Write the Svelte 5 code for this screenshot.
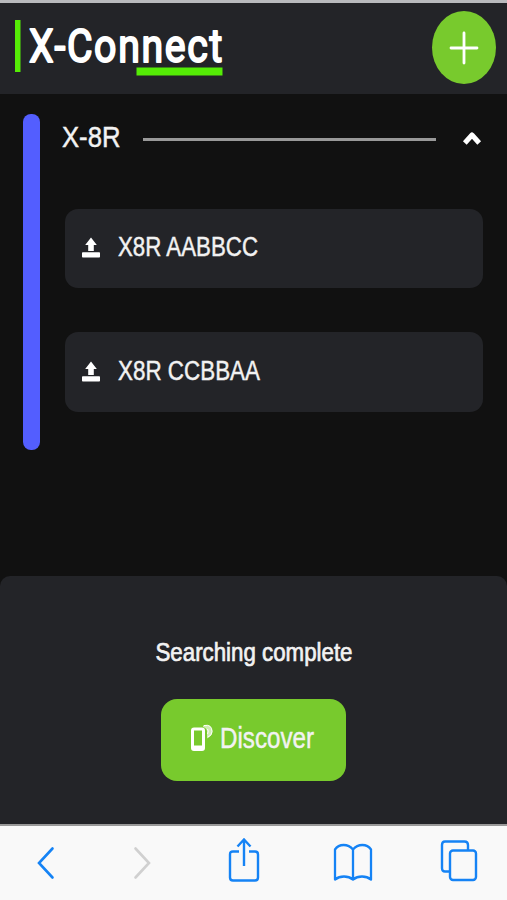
<script>
  // Devices found during the last scan
  const devices = [
    { id: 'AABBCC', label: 'X8R AABBCC', width: 140 },
    { id: 'CCBBAA', label: 'X8R CCBBAA', width: 142 }
  ];

  let open = $state(true);
  let status = $state('Searching complete');
</script>

<div class="app">
  <header>
    <svg class="logo" width="220" height="64" viewBox="0 0 220 64">
      <rect x="0" y="0" width="5.500" height="52" fill="#55ec06" />
      <text x="14" y="42" textLength="195" lengthAdjust="spacingAndGlyphs">X-Connect</text>
      <rect x="121.500" y="47.500" width="86" height="8" fill="#55ec06" />
    </svg>
    <button class="add" aria-label="Add device">
      <svg width="30" height="34" viewBox="0 0 30 34">
        <path d="M15 2V32M2 17H28" fill="none" stroke="#fff" stroke-width="2.800" stroke-linecap="round" />
      </svg>
    </button>
  </header>

  <main>
    <div class="bar"></div>
    <section>
      <button class="group" aria-label="Toggle group" onclick={() => (open = !open)}>
        <svg class="title" width="64" height="44" viewBox="0 0 64 44">
          <text x="0" y="30" textLength="58.500" lengthAdjust="spacingAndGlyphs">X-8R</text>
        </svg>
        <span class="line"></span>
        <svg class="chevron" class:closed={!open} width="20" height="16" viewBox="0 0 20 16">
          <path d="M2.800 12L10 4L17.200 12" fill="none" stroke="#fff" stroke-width="5" stroke-linejoin="round" />
        </svg>
      </button>

      {#if open}
        <div class="devices">
          {#each devices as device (device.id)}
            <div class="device">
              <svg width="20" height="22" viewBox="0 0 20 22">
                <path d="M10 0.500L15.800 8H12.800V14H7.200V8H4.200Z" fill="#fff" />
                <rect x="1" y="15.300" width="18" height="5.200" rx="0.800" fill="#fff" />
              </svg>
              <svg class="name" width="180" height="40" viewBox="0 0 180 40">
                <text x="0" y="28" textLength={device.width} lengthAdjust="spacingAndGlyphs">{device.label}</text>
              </svg>
            </div>
          {/each}
        </div>
      {/if}
    </section>
  </main>

  <div class="panel">
    <svg class="status" width="220" height="34" viewBox="0 0 220 34">
      <text x="11.500" y="24" textLength="197" lengthAdjust="spacingAndGlyphs">{status}</text>
    </svg>
    <button class="discover">
      <svg width="24" height="30" viewBox="0 0 24 30">
        <rect x="2.500" y="6" width="11" height="20.500" rx="1.500" fill="none" stroke="#fff" stroke-width="3" />
        <path d="M2 22.500H14V27H2Z" fill="#fff" />
        <path d="M13 2.500Q21 0 22.500 8Q22.500 13 17 15.500V8.500Q17 5 13 4Z" fill="#fff" fill-opacity="0.650" />
        <path d="M14 2.500Q22 1 22 8.500Q22 12.500 18 14M17.500 6Q19 8 17.500 11" fill="none" stroke="#fff" stroke-width="1" />
      </svg>
      <svg width="100" height="40" viewBox="0 0 100 40">
        <text x="0" y="29.500" textLength="94" lengthAdjust="spacingAndGlyphs">Discover</text>
      </svg>
    </button>
  </div>

  <!-- browser toolbar -->
  <nav>
    <svg width="20" height="36" viewBox="0 0 20 36">
      <path d="M16.500 3.500L3 18L16.500 32.500" fill="none" stroke="#1583f5" stroke-width="2.600" stroke-linecap="round" />
    </svg>
    <svg width="20" height="36" viewBox="0 0 20 36">
      <path d="M3.500 3.500L17 18L3.500 32.500" fill="none" stroke="#d0d0d0" stroke-width="2.600" stroke-linecap="round" />
    </svg>
    <svg width="32" height="52" viewBox="0 0 32 52">
      <path d="M11 14.500H5Q2 14.500 2 17.500V40.500Q2 43.500 5 43.500H27Q30 43.500 30 40.500V17.500Q30 14.500 27 14.500H21M16 29V2.500M9.500 9.500L16 2.500L22.500 9.500" fill="none" stroke="#1583f5" stroke-width="2.400" />
    </svg>
    <svg width="40" height="40" viewBox="0 0 40 40">
      <path d="M20 6.500C15 0.500 6 0.500 2 6.500V36.500C7 32.500 15 32.500 20 36.500C25 32.500 33 32.500 38 36.500V6.500C34 0.500 25 0.500 20 6.500V36.500" fill="none" stroke="#1583f5" stroke-width="2.300" stroke-linejoin="round" />
    </svg>
    <svg width="38" height="48" viewBox="0 0 38 48">
      <path d="M9.500 32.500H5Q2 32.500 2 29V6Q2 2.500 5 2.500H24.500Q28 2.500 28 6V11" fill="none" stroke="#1583f5" stroke-width="2.400" />
      <rect x="10" y="11.500" width="26" height="29.500" rx="3" fill="none" stroke="#1583f5" stroke-width="2.400" />
    </svg>
  </nav>
</div>

<style>
  :global(body) {
    margin: 0;
    background: #111;
  }

  .app {
    display: flex;
    flex-direction: column;
    width: 507px;
    height: 900px;
    overflow: hidden;
    background: #111;
    font-family: 'Liberation Sans', Arial, sans-serif;
  }

  svg {
    display: block;
    flex: none;
    overflow: visible;
  }

  text {
    fill: #f2f2f2;
    stroke: #f2f2f2;
    stroke-width: 0.45px;
  }

  button {
    padding: 0;
    border: none;
    background: none;
    font-family: inherit;
    cursor: pointer;
  }

  header {
    display: flex;
    justify-content: space-between;
    align-items: flex-start;
    box-sizing: border-box;
    height: 94px;
    padding: 8px 11px 0 15px;
    border-top: 3px solid #b9babd;
    background: #232428;
  }

  .logo {
    margin-top: 9px;
  }

  .logo text {
    font-family: Roboto, sans-serif;
    font-size: 47px;
    letter-spacing: 2px;
    fill: #fff;
    stroke: #fff;
    stroke-width: 2px;
    stroke-linejoin: round;
  }

  .add {
    display: flex;
    justify-content: center;
    align-items: center;
    width: 64px;
    height: 73px;
    border-radius: 50%;
    background: #78ca2d;
  }

  main {
    display: flex;
    flex: 1;
    align-items: flex-start;
    padding: 20px 24px 0 23px;
  }

  .bar {
    width: 16.500px;
    height: 336px;
    border-radius: 8px;
    background: #535eff;
  }

  section {
    flex: 1;
    margin-left: 22.500px;
  }

  .group {
    display: flex;
    align-items: center;
    width: 100%;
    height: 50px;
  }

  .title text {
    font-size: 29px;
  }

  .line {
    flex: 1;
    height: 3px;
    margin: 0 26px 0 17px;
    background: #999;
  }

  .chevron {
    margin-right: 1px;
  }

  .chevron.closed {
    transform: rotate(180deg);
  }

  .devices {
    display: flex;
    flex-direction: column;
    gap: 44px;
    padding: 44.500px 0 0 2.500px;
  }

  .device {
    display: flex;
    align-items: center;
    gap: 17px;
    box-sizing: border-box;
    height: 79.500px;
    padding-left: 16px;
    border-radius: 13px;
    background: #232428;
  }

  .name text {
    font-size: 27px;
  }

  .panel {
    display: flex;
    flex-direction: column;
    align-items: center;
    box-sizing: border-box;
    height: 248px;
    padding-top: 61px;
    border-radius: 10px 10px 0 0;
    background: #232428;
  }

  .status text {
    font-size: 26px;
    stroke-width: 0.7px;
  }

  .discover {
    display: flex;
    align-items: center;
    gap: 6px;
    box-sizing: border-box;
    width: 185px;
    height: 82px;
    margin-top: 28px;
    padding: 0 0 4px 29px;
    border-radius: 16px;
    background: #78ca2d;
  }

  .discover text {
    font-size: 29px;
  }

  nav {
    display: grid;
    grid-template-columns: 96px 96px 104.500px 107.500px 38px;
    align-items: center;
    box-sizing: border-box;
    height: 76px;
    padding: 0 29px 0 36px;
    border-top: 2px solid #999;
    background: #f9f9f9;
  }
</style>
